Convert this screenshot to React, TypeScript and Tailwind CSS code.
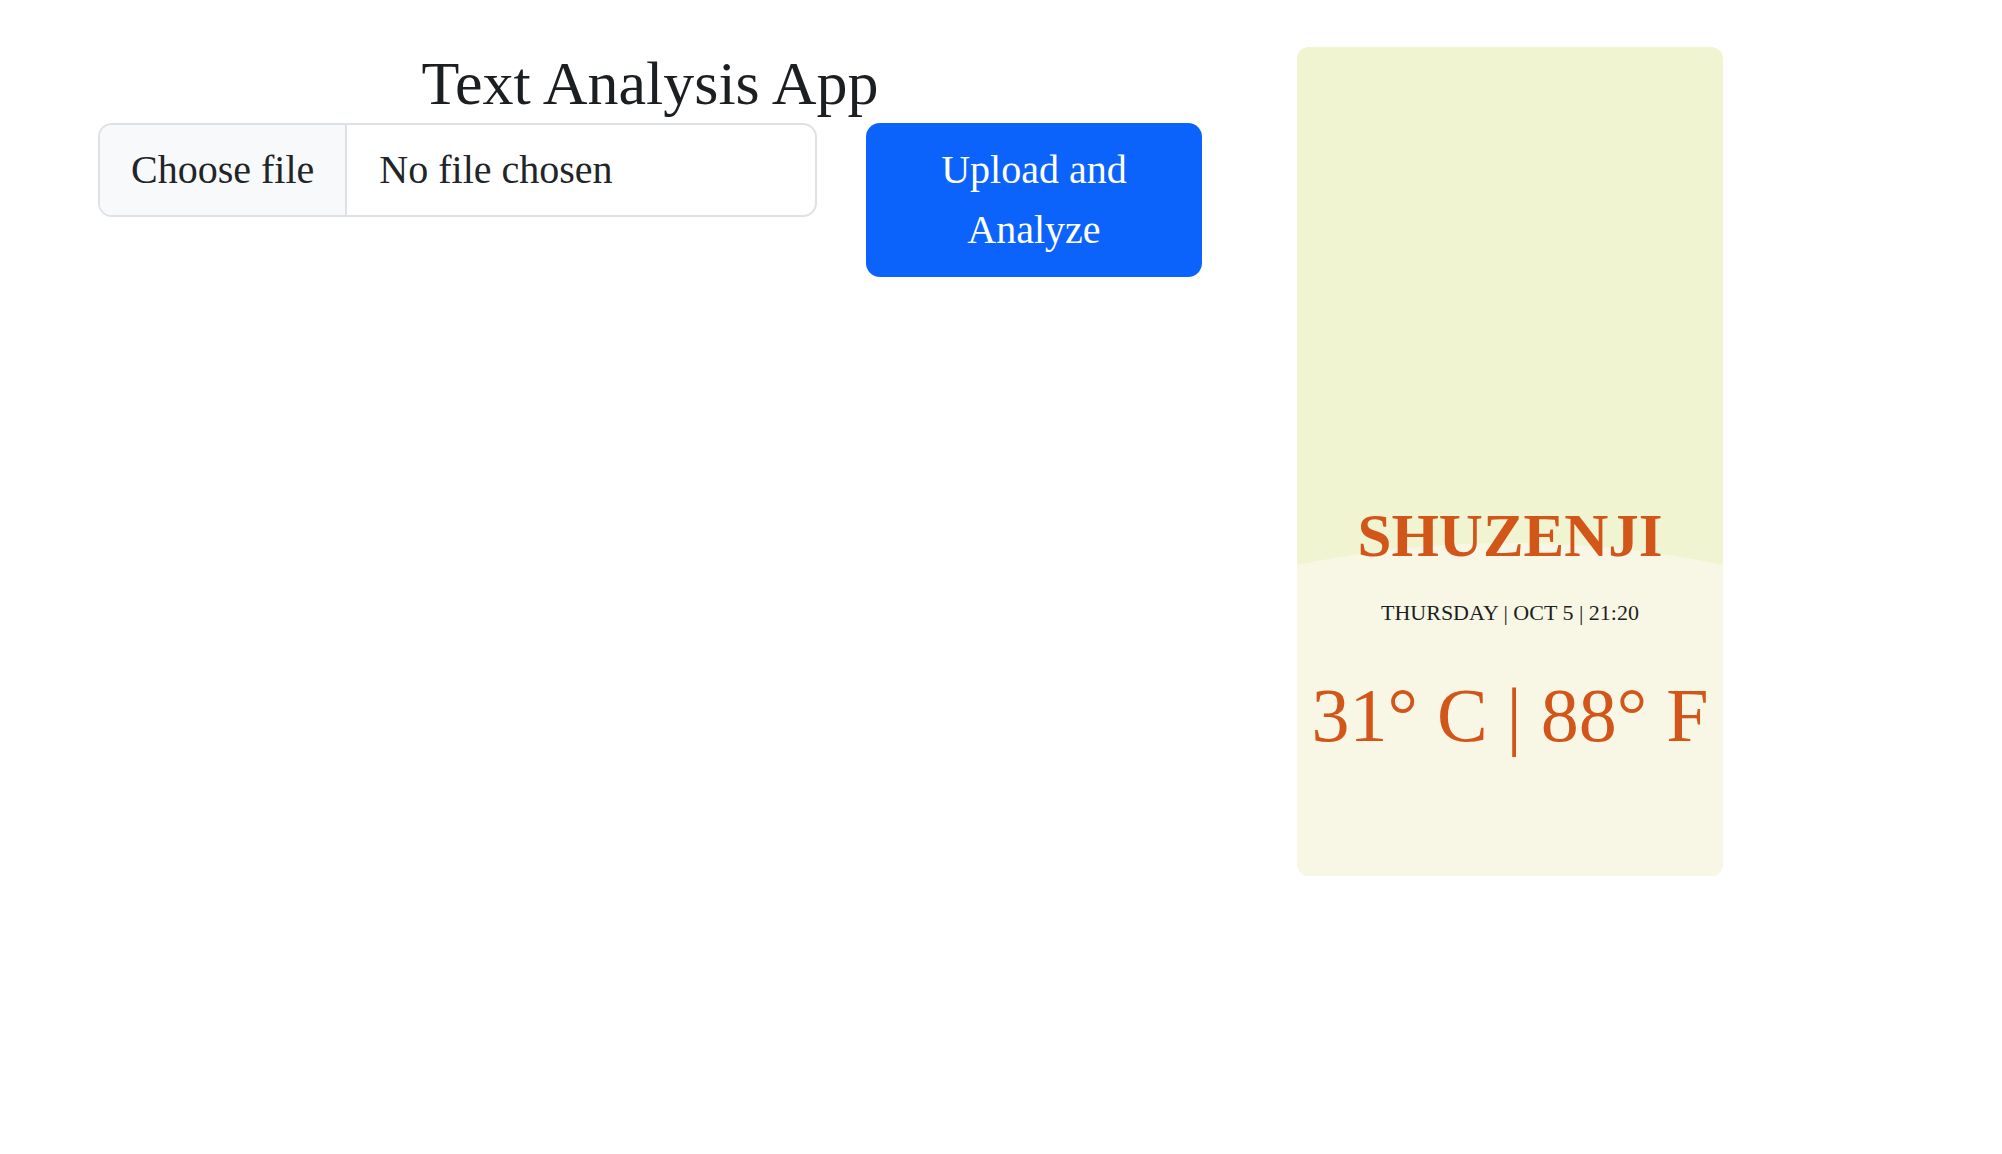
import { useState } from "react";

function FileField() {
  const [fileName, setFileName] = useState<string | null>(null);

  return (
    <label className="flex h-[94px] w-[719px] shrink-0 cursor-pointer items-stretch overflow-hidden rounded-[14px] border-2 border-[#dee2e6] bg-white text-[40px] leading-[60px] text-[#212529]">
      <input
        type="file"
        className="hidden"
        onChange={(e) => setFileName(e.target.files?.[0]?.name ?? null)}
      />
      <span className="flex items-center border-r-2 border-[#dee2e6] bg-[#f8f9fa] px-[31px]">Choose file</span>
      <span className="flex items-center truncate pl-[32px]">{fileName ?? "No file chosen"}</span>
    </label>
  );
}

function WeatherCard() {
  return (
    <div className="relative h-[829px] w-[426px] shrink-0 overflow-hidden rounded-[12px]">
      {/* background wave */}
      <svg className="absolute inset-0 h-full w-full" viewBox="0 0 426 829" preserveAspectRatio="none">
        <rect x="0" y="0" width="426" height="829" fill="#f1f4d1" />
        <path d="M0 518 Q213 474 426 518 L426 829 L0 829 Z" fill="#f8f7e5" />
      </svg>

      <div className="relative flex flex-col items-center pt-[453px] text-center">
        <h2 className="text-[61px] font-bold leading-[72px] text-[#d2561a]">SHUZENJI</h2>
        <p className="mt-[24px] text-[22px] leading-[33px] text-[#1c1f22]">THURSDAY | OCT 5 | 21:20</p>
        <p className="mt-[41px] whitespace-nowrap text-[76px] leading-[91px] text-[#d2561a]">31° C | 88° F</p>
      </div>
    </div>
  );
}

export default function App() {
  return (
    <div
      className="flex min-h-screen bg-white pl-[98px] pt-[47px]"
      style={{ fontFamily: '"Liberation Serif", "Times New Roman", serif' }}
    >
      <div className="flex w-[1104px] shrink-0 flex-col">
        <h1 className="text-center text-[62px] leading-[72px] text-[#1c1f22]">Text Analysis App</h1>
        <div className="mt-[4px] flex items-start gap-[49px]">
          <FileField />
          <button className="h-[154px] flex-1 rounded-[14px] bg-[#0b63fc] px-[30px] text-[40px] leading-[60px] text-white">
            Upload and Analyze
          </button>
        </div>
      </div>

      <div className="ml-[95px]">
        <WeatherCard />
      </div>
    </div>
  );
}
